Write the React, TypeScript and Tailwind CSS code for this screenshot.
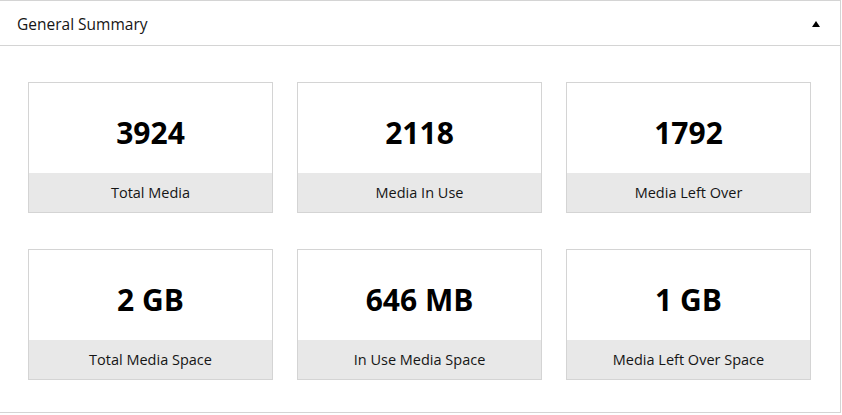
import React from "react";

const stats = [
  { value: "3924", label: "Total Media" },
  { value: "2118", label: "Media In Use" },
  { value: "1792", label: "Media Left Over" },
  { value: "2 GB", label: "Total Media Space" },
  { value: "646 MB", label: "In Use Media Space" },
  { value: "1 GB", label: "Media Left Over Space" },
];

function StatCard({ value, label }: { value: string; label: string }) {
  return (
    <div className="flex flex-col border border-[#d4d4d4] bg-white">
      <div className="flex h-[90px] items-center justify-center pt-[8px] text-[30px] font-bold text-black">
        {value}
      </div>
      <div className="flex h-[39px] items-center justify-center bg-[#e8e8e8] text-[14.5px] text-[#151515]">
        {label}
      </div>
    </div>
  );
}

export default function App() {
  return (
    <div className="h-[415px] w-[842px] bg-white font-['Open_Sans',sans-serif]">
      <div className="w-[841px] border-t border-r border-b border-[#d4d4d4] bg-white">
        <div className="flex h-[45px] items-center justify-between border-b border-[#d4d4d4] pt-[4px] pl-[17px] pr-[20px]">
          <h2 className="text-[15.5px] text-[#151515]">General Summary</h2>
          <svg width="8" height="6" viewBox="0 0 8 6" className="mt-[-2px]">
            <polygon points="4,0 8,6 0,6" fill="#000" />
          </svg>
        </div>
        <div className="grid grid-cols-3 gap-x-[24px] gap-y-[36px] pt-[36px] pb-[32px] pl-[28px] pr-[29px]">
          {stats.map((s) => (
            <StatCard key={s.label} value={s.value} label={s.label} />
          ))}
        </div>
      </div>
    </div>
  );
}
